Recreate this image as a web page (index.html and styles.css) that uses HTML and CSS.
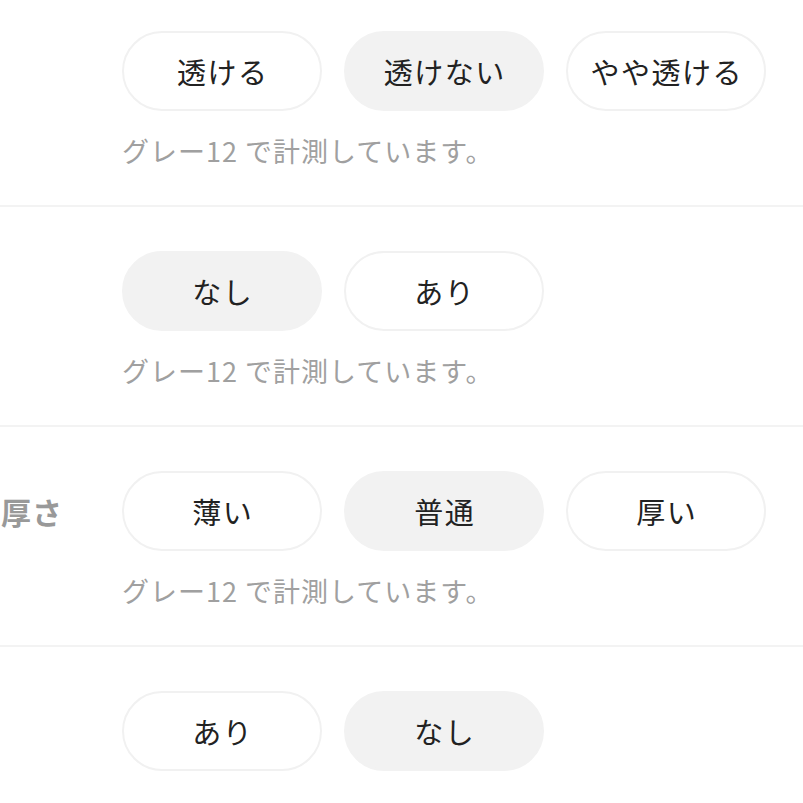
FILE: index.html
```html
<!DOCTYPE html>
<html lang="ja">
<head>
<meta charset="utf-8">
<link rel="stylesheet" href="styles.css">
</head>
<body>
<div class="spec">
  <div class="row">
    <div class="label"></div>
    <div class="body">
      <div class="options">
        <div class="pill">透ける</div>
        <div class="pill is-active">透けない</div>
        <div class="pill">やや透ける</div>
      </div>
      <p class="note">グレー12 で計測しています。</p>
    </div>
  </div>
  <div class="row">
    <div class="label"></div>
    <div class="body">
      <div class="options">
        <div class="pill is-active">なし</div>
        <div class="pill">あり</div>
      </div>
      <p class="note">グレー12 で計測しています。</p>
    </div>
  </div>
  <div class="row">
    <div class="label">厚さ</div>
    <div class="body">
      <div class="options">
        <div class="pill">薄い</div>
        <div class="pill is-active">普通</div>
        <div class="pill">厚い</div>
      </div>
      <p class="note">グレー12 で計測しています。</p>
    </div>
  </div>
  <div class="row">
    <div class="label"></div>
    <div class="body">
      <div class="options">
        <div class="pill">あり</div>
        <div class="pill is-active">なし</div>
      </div>
    </div>
  </div>
</div>
</body>
</html>
```

FILE: styles.css
```css
html, body {
  margin: 0;
  padding: 0;
  background: #ffffff;
  overflow: hidden;
}
body {
  font-family: "Noto Sans CJK JP", "Noto Sans", sans-serif;
  color: #222222;
}
.spec {
  margin-top: -13px;
  width: 803px;
}
.row {
  display: grid;
  grid-template-columns: 122px 1fr;
  padding: 44px 0 36px;
  border-bottom: 2px solid #f3f3f3;
}
.row:last-child {
  border-bottom: none;
}
.label {
  height: 80px;
  display: flex;
  align-items: center;
  padding-left: 1px;
  font-size: 30px;
  font-weight: 700;
  letter-spacing: 1px;
  color: #999999;
  white-space: nowrap;
}
.options {
  display: flex;
  gap: 22px;
}
.pill {
  box-sizing: border-box;
  width: 200px;
  height: 80px;
  border-radius: 40px;
  border: 2px solid #f1f1f1;
  background: #ffffff;
  display: flex;
  align-items: center;
  justify-content: center;
  font-size: 29px;
  letter-spacing: 1.5px;
  text-indent: 1.5px;
  color: #222222;
}
.pill.is-active {
  background: #f2f2f2;
  border-color: #f2f2f2;
}
.note {
  margin: 22px 0 0;
  font-size: 27px;
  letter-spacing: 1px;
  line-height: 36px;
  color: #a0a0a0;
}
```
